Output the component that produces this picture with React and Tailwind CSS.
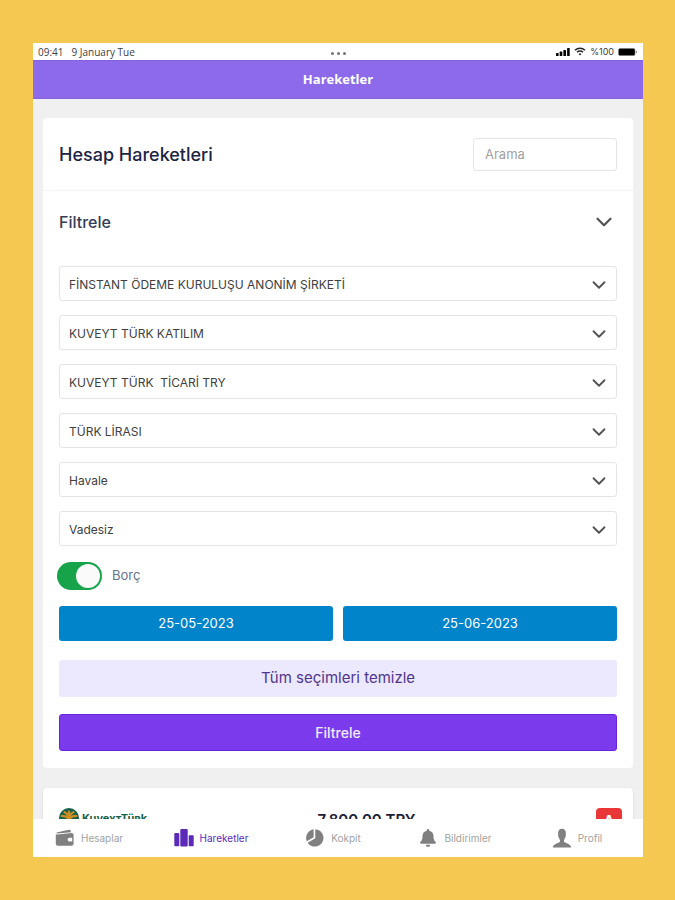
// App.jsx
import { useState } from "react";
import { ChevronDown } from "lucide-react";

const FILTERS = [
  { id: "firma", label: "Firma", value: "FİNSTANT ÖDEME KURULUŞU ANONİM ŞİRKETİ" },
  { id: "banka", label: "Banka", value: "KUVEYT TÜRK KATILIM" },
  { id: "hesap", label: "Hesap", value: "KUVEYT TÜRK\u00a0 TİCARİ TRY" },
  { id: "doviz", label: "Döviz", value: "TÜRK LİRASI" },
  { id: "islem", label: "İşlem", value: "Havale" },
  { id: "vade", label: "Vade", value: "Vadesiz" },
];

function WalletIcon() {
  return (
    <svg viewBox="0 0 20 20" className="h-5 w-5 shrink-0" fill="currentColor">
      <path d="M1.600 4.600 13.800 1.800c1-.2 1.700.2 1.900 1l.3 1.500L2.400 5.600c-.6 0-1-.6-.8-1Z" />
      <path
        fillRule="evenodd"
        d="M.8 5.900c.4.500 1 .7 1.600.7L16.600 5c1.200 0 2 .8 2 1.900v8.900c0 1.100-.8 1.900-1.900 1.900H2.800C1.600 17.700.8 16.900.8 15.800V5.900Zm13.700 3.800a1.900 1.900 0 0 0 0 3.800h2.700V9.700h-2.700Z"
      />
    </svg>
  );
}

function BarsIcon() {
  return (
    <svg viewBox="0 0 20 20" className="h-5 w-5 shrink-0" fill="currentColor">
      <rect x="0.300" y="5" width="5" height="13.200" rx="1" />
      <rect x="6.300" y="1" width="7.400" height="17.500" rx="1" />
      <rect x="14.700" y="7.200" width="5" height="11" rx="1" />
    </svg>
  );
}

function PieIcon() {
  return (
    <svg viewBox="0 0 20 20" className="h-5 w-5 shrink-0" fill="currentColor">
      <path d="M8.600 1.300v8L1.800 13.300A8.700 8.700 0 0 1 8.600 1.300Z" />
      <path d="M10.300 1.200a8.700 8.700 0 1 1-7.700 13.600l7.700-4.500V1.200Z" />
    </svg>
  );
}

function BellIcon() {
  return (
    <svg viewBox="0 0 20 20" className="h-5 w-5 shrink-0" fill="currentColor">
      <path d="M10 1c.8 0 1.300.6 1.300 1.300v.5c2.700.6 4.200 2.600 4.200 5.200 0 3.500.8 4.700 2 5.800.8.800.4 2-.6 2H3.100c-1 0-1.400-1.200-.6-2C3.700 12.700 4.500 11.500 4.500 8c0-2.600 1.500-4.600 4.200-5.200v-.5C8.700 1.600 9.200 1 10 1Z" />
      <path d="M7.800 16.700h4.400a2.200 2.200 0 0 1-4.400 0Z" />
    </svg>
  );
}

function ProfileIcon() {
  return (
    <svg viewBox="0 0 20 20" className="h-5 w-5 shrink-0" fill="currentColor">
      <path d="M10 .8c2.500 0 3.900 1.900 3.900 4.500 0 1.100-.1 1.500-.3 1.900.6.400.2 2-.5 2.200-.3 1.100-.6 1.900-1.100 2.500v1.800c1.300 1.700 7 1.800 7.200 5.700H.8c.2-3.900 5.900-4 7.200-5.700v-1.800c-.5-.6-.8-1.400-1.100-2.500-.7-.2-1.100-1.800-.5-2.200-.2-.4-.3-.8-.3-1.900C6.100 2.700 7.500.8 10 .8Z" />
    </svg>
  );
}

const TABS = [
  { label: "Hesaplar", icon: WalletIcon },
  { label: "Hareketler", icon: BarsIcon, active: true },
  { label: "Kokpit", icon: PieIcon },
  { label: "Bildirimler", icon: BellIcon },
  { label: "Profil", icon: ProfileIcon },
];

function StatusBar() {
  return (
    <div className="grid h-[17px] shrink-0 grid-cols-3 items-center bg-white px-[5px] text-[9px] leading-none text-neutral-700">
      <div className="flex gap-2 font-['Open_Sans',sans-serif] text-[10px]">
        <span>09:41</span>
        <span>9 January Tue</span>
      </div>
      <div className="flex justify-center gap-[3px] pt-1">
        <span className="h-[3px] w-[3px] rounded-full bg-neutral-500" />
        <span className="h-[3px] w-[3px] rounded-full bg-neutral-500" />
        <span className="h-[3px] w-[3px] rounded-full bg-neutral-500" />
      </div>
      <div className="flex items-center justify-end gap-1">
        <svg viewBox="0 0 14 8" className="h-2 w-3.5 text-black" fill="currentColor">
          <rect x="0" y="5" width="2.600" height="3" rx=".6" />
          <rect x="3.700" y="3.600" width="2.600" height="4.400" rx=".6" />
          <rect x="7.400" y="1.900" width="2.600" height="6.100" rx=".6" />
          <rect x="11.100" y="0" width="2.600" height="8" rx=".6" />
        </svg>
        <svg viewBox="0 0 12 9" className="h-[9px] w-3 text-neutral-800" fill="none" stroke="currentColor" strokeWidth="1.500">
          <path d="M1 3.200a7.200 7.200 0 0 1 10 0M3 5.300a4.400 4.400 0 0 1 6 0" />
          <path d="m4.600 7 1.400 1.500L7.400 7a2 2 0 0 0-2.800 0Z" fill="currentColor" stroke="none" />
        </svg>
        <span>%100</span>
        <svg viewBox="0 0 20 8" className="h-2 w-5 text-black">
          <rect x=".5" y=".5" width="16.500" height="7" rx="1.500" fill="currentColor" stroke="#777" strokeWidth=".6" />
          <path d="M18 2.800v2.400c.7-.2 1-.7 1-1.200s-.3-1-1-1.200Z" fill="#777" />
        </svg>
      </div>
    </div>
  );
}

function FilterSelect({ id, label, value }) {
  return (
    <div className="relative">
      <select
        id={id}
        aria-label={label}
        className="block h-[35px] w-full appearance-none rounded-[3px] border border-neutral-200 bg-white pt-0.5 pr-10 pl-[9px] text-xs text-neutral-700"
      >
        <option>{value}</option>
      </select>
      <ChevronDown
        className="pointer-events-none absolute top-2 right-[7px] h-[22px] w-[22px] text-neutral-600"
        strokeWidth={2}
      />
    </div>
  );
}

function BankLogo() {
  return (
    <div className="flex items-center gap-[3px] text-[#17614a]">
      <svg viewBox="0 0 20 20" className="h-5 w-5">
        <circle cx="10" cy="10" r="10" fill="#17614a" />
        <g fill="none" stroke="#d08e22" strokeWidth="2.200" strokeLinecap="round">
          <path d="M10 18V3.500M10 9C8.500 6 7 4.700 5.500 4.200M10 9c1.500-3 3-4.300 4.500-4.800M10 11C7.500 8.500 5 7.700 2.800 8M10 11c2.500-2.500 5-3.300 7.200-3M10 13c-2.500-1.300-4.700-1.300-6.500 0M10 13c2.500-1.300 4.700-1.300 6.500 0" />
        </g>
      </svg>
      <span className="text-[11px] leading-5 font-bold [font-variant:small-caps]">KuveytTürk</span>
    </div>
  );
}

export default function App() {
  const [borc, setBorc] = useState(true);

  return (
    <div className="flex h-screen flex-col bg-[#f4c851] py-[43px] pr-8 pl-[33px] font-[Inter,'Open_Sans',sans-serif]">
      <div className="flex min-h-0 flex-1 flex-col bg-[#f1f0f1]">
        <StatusBar />

        <header className="flex h-[39px] shrink-0 items-center justify-center border-y border-[#8460dc] bg-[#8c6aea]">
          <h1 className="font-['Open_Sans',sans-serif] text-[13px] font-bold text-white">
            Hareketler
          </h1>
        </header>

        <main className="min-h-0 flex-1 overflow-hidden px-2.5 pt-[19px]">
          <section className="rounded bg-white">
            <div className="flex h-[73px] items-center justify-between border-b border-neutral-100 px-4">
              <h2 className="pt-0.5 text-lg font-medium text-[#1c2444]">Hesap Hareketleri</h2>
              <input
                type="search"
                aria-label="Arama"
                placeholder="Arama"
                className="h-[33px] w-36 rounded-[3px] border border-neutral-200 px-[11px] text-[13px] placeholder:text-neutral-400"
              />
            </div>

            <div className="px-4 pt-[15px] pb-[17px]">
              <button type="button" className="flex h-8 w-full items-center justify-between">
                <span className="text-base font-medium text-[#343c55]">Filtrele</span>
                <ChevronDown className="h-[26px] w-[26px] text-neutral-600" strokeWidth={2} />
              </button>

              <div className="mt-7 flex flex-col gap-3.5">
                {FILTERS.map((filter) => (
                  <FilterSelect key={filter.id} {...filter} />
                ))}
              </div>

              <label className="mt-4 -ml-0.5 flex w-fit items-center gap-2.5 text-[13px] text-slate-500">
                <span className="flex h-7 w-[45px] rounded-full bg-[#17a34a] p-0.5 has-[:not(:checked)]:bg-neutral-300">
                  <input
                    type="checkbox"
                    role="switch"
                    checked={borc}
                    onChange={() => setBorc(!borc)}
                    className="h-6 w-6 appearance-none rounded-full bg-neutral-50 checked:ml-auto"
                  />
                </span>
                Borç
              </label>

              <div className="mt-4 grid grid-cols-2 gap-2.5">
                {["25-05-2023", "25-06-2023"].map((date) => (
                  <button
                    key={date}
                    type="button"
                    className="h-[35px] rounded-[3px] bg-[#0284cb] text-[13px] text-white"
                  >
                    {date}
                  </button>
                ))}
              </div>

              <button
                type="button"
                className="mt-[19px] h-[37px] w-full rounded-[3px] bg-[#ece8fd] text-[15px] text-[#50368f]"
              >
                Tüm seçimleri temizle
              </button>
              <button
                type="button"
                className="mt-[17px] h-[37px] w-full rounded-[3px] border border-[#6c22dc] bg-[#7c3aed] text-sm font-medium text-white/90"
              >
                Filtrele
              </button>
            </div>
          </section>

          <section className="mt-5 flex items-start justify-between rounded bg-white pt-5 pr-[11px] pb-5 pl-4 shadow">
            <BankLogo />
            <p className="mr-2.5 text-[15px] leading-6 font-semibold text-[#1c2035]">7.800,00 TRY</p>
            <span className="grid h-[26px] w-[26px] place-items-center rounded bg-[#e93637] text-sm font-bold text-white">
              A
            </span>
          </section>
        </main>

        <nav className="z-10 grid h-[38px] shrink-0 grid-cols-5 bg-white">
          {TABS.map(({ label, icon: Icon, active }) => (
            <a
              key={label}
              href="#"
              className={[
                "flex items-center justify-center gap-1.5 pr-2.5 text-[10px]",
                active ? "text-[#5b2bb8]" : "text-[#808080]",
              ].join(" ")}
            >
              <Icon />
              <span className={active ? "" : "text-neutral-400"}>{label}</span>
            </a>
          ))}
        </nav>
      </div>
    </div>
  );
}
